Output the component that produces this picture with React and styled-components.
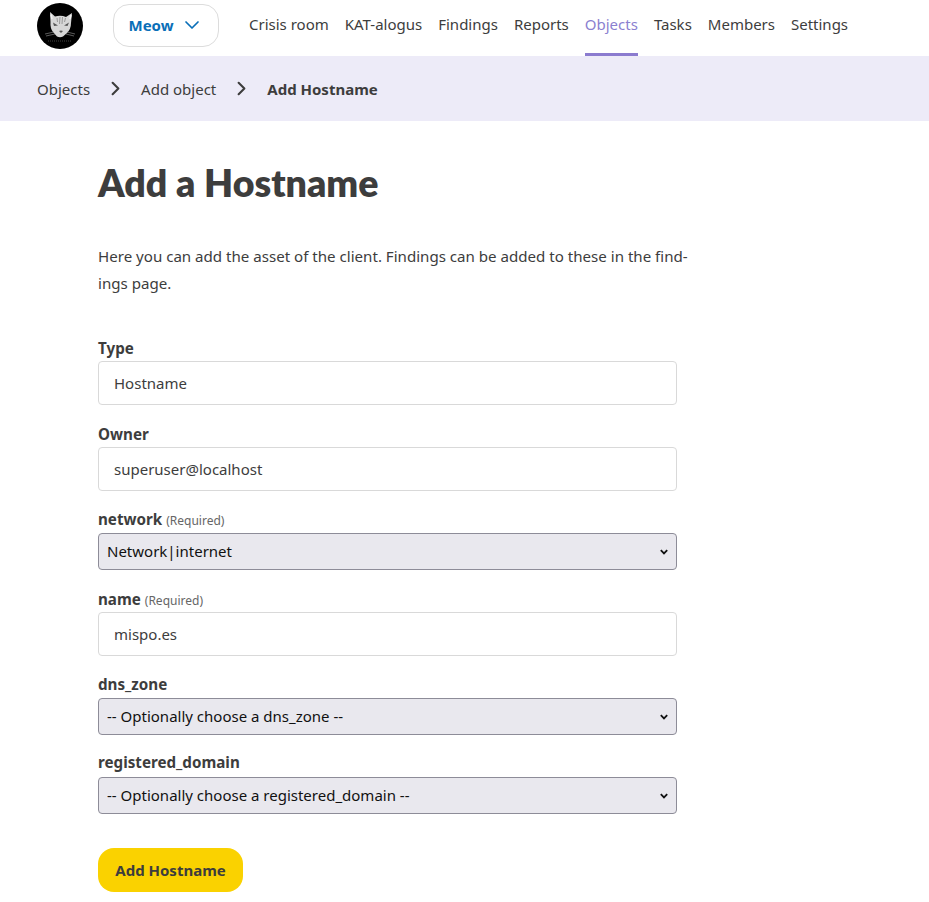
import React from 'react'
import styled, { createGlobalStyle } from 'styled-components'
import { ChevronDown, ChevronRight } from 'lucide-react'

const GlobalStyle = createGlobalStyle`
    html, body {
        margin: 0;
        background: #fff;
    }
    body {
        font-family: "Noto Sans", "Open Sans", sans-serif;
        font-size: 15px;
        color: #3d3d3d;
    }
`;

const selectArrow = `url("data:image/svg+xml,%3Csvg xmlns='http://www.w3.org/2000/svg' width='8' height='6' viewBox='0 0 8 6'%3E%3Cpath d='M.8 1.2 4 4.4 7.2 1.2' fill='none' stroke='%23111' stroke-width='1.8'/%3E%3C/svg%3E")`;

const Header = styled.header`
    display: flex;
    align-items: stretch;
    height: 56px;
    padding-left: 37px;
`;
const Logo = styled.svg`
    width: 46px;
    height: 46px;
    margin-top: 3px;
    flex: none;
`;
const OrgButton = styled.button`
    display: flex;
    align-items: center;
    justify-content: center;
    gap: 6px;
    box-sizing: border-box;
    width: 106px;
    height: 43px;
    margin: 4px 30px 0;
    padding: 0 0 2px;
    border: 1px solid #dcdcdc;
    border-radius: 16px;
    background: #fff;
    color: #0a6fb8;
    font: 700 15px "Noto Sans", sans-serif;
`;
const Nav = styled.nav`
    display: flex;
    gap: 16px;
`;
const NavLink = styled.a`
    display: flex;
    align-items: center;
    box-sizing: border-box;
    height: 56px;
    padding-bottom: 6px;
    color: ${p => (p.$active ? '#8b7fd0' : '#3d3d3d')};
    border-bottom: 3px solid ${p => (p.$active ? '#8b7bcf' : 'transparent')};
`;

const Breadcrumbs = styled.div`
    display: flex;
    align-items: center;
    gap: 14px;
    height: 65px;
    padding-left: 37px;
    background: #edebf8;
`;
const Crumb = styled.span`
    font-weight: ${p => (p.$current ? 700 : 400)};
`;

const Main = styled.main`
    padding: 33px 0 10px 98px;
`;
const Title = styled.h1`
    margin: 0;
    font: 800 37.5px/58px Lato, sans-serif;
    color: #3d3d3d;
`;
const Intro = styled.p`
    width: 600px;
    margin: 31px 0 0;
    font-size: 15.1px;
    line-height: 27px;
`;
const Form = styled.form`
    width: 579px;
    margin-top: 41px;
    display: flex;
    flex-direction: column;
`;
const Field = styled.div`
    display: flex;
    flex-direction: column;
    margin-bottom: ${p => p.$gap}px;
`;
const Label = styled.label`
    font-size: 15.2px;
    font-weight: 700;
    line-height: 20px;
    margin-bottom: ${p => p.$gap}px;
`;
const Hint = styled.span`
    font-size: 12px;
    font-weight: 400;
    color: #666;
`;
const Input = styled.input`
    box-sizing: border-box;
    height: 44px;
    width: 100%;
    padding: 0 15px;
    border: 1px solid #d9d9d9;
    border-radius: 4px;
    background: #fff;
    color: #3d3d3d;
    font: 400 15px "Noto Sans", sans-serif;
`;
const Select = styled.select`
    appearance: none;
    box-sizing: border-box;
    height: 37px;
    width: 100%;
    padding: 0 8px 2px;
    border: 1px solid #8d8c98;
    border-radius: 4px;
    background: #e9e8ee ${selectArrow} no-repeat right 8px center;
    color: #111;
    font: 400 15px "Noto Sans", sans-serif;
`;
const Submit = styled.button`
    width: 145px;
    height: 44px;
    margin-top: 4px;
    border: 0;
    border-radius: 16px;
    background: #fad200;
    color: #3d3d3d;
    font: 700 15px "Noto Sans", sans-serif;
`;

const CatLogo = () => (
    <Logo viewBox="0 0 46 46">
        <circle cx="23" cy="23" r="23" fill="#000" />
        <path
            d="M13 9 L18 13.5 Q24 12 29 14 L35 10 L34 20 Q34 26 30 30 L26 33.5 Q23 35 20 33.5 L16 29 Q13 25 13.5 19 Z"
            fill="#d6d6d6"
        />
        <path d="M16 19.5 L21 22.5 L17 23 Z M32 19.5 L27 22.5 L30.5 23 Z" fill="#555" />
        <path d="M23 14 L22.5 21 M25.5 14 L25 21 M20 15 L20.5 19 M28.5 15 L27.5 19" stroke="#999" strokeWidth="1" />
        <path d="M22 28 L24 30 L26 28 L24 27.5 Z" fill="#555" />
        <path d="M14 11.5 L15 16 M34 12 L33 16" stroke="#f2f2f2" strokeWidth="1.5" />
        <path
            d="M8 31 L17 29 M9 33 L18 31 M38 31 L30 29 M37 33 L29 31"
            stroke="#999"
            strokeWidth="0.6"
        />
        <path d="M11 38 H35" stroke="#444" strokeWidth="1" strokeDasharray="1 1" />
    </Logo>
)

const navItems = ['Crisis room', 'KAT-alogus', 'Findings', 'Reports', 'Objects', 'Tasks', 'Members', 'Settings']

const App = () => {
    return (
        <>
            <GlobalStyle />
            <Header>
                <CatLogo />
                <OrgButton>
                    Meow
                    <ChevronDown size={24} strokeWidth={1.7} />
                </OrgButton>
                <Nav>
                    {navItems.map(item => (
                        <NavLink key={item} $active={item === 'Objects'}>{item}</NavLink>
                    ))}
                </Nav>
            </Header>
            <Breadcrumbs>
                <Crumb>Objects</Crumb>
                <ChevronRight size={23} strokeWidth={2.2} />
                <Crumb>Add object</Crumb>
                <ChevronRight size={23} strokeWidth={2.2} />
                <Crumb $current>Add Hostname</Crumb>
            </Breadcrumbs>
            <Main>
                <Title>Add a Hostname</Title>
                <Intro>
                    Here you can add the asset of the client. Findings can be added to these in the find&shy;ings page.
                </Intro>
                <Form>
                    <Field $gap={19}>
                        <Label $gap={3}>Type</Label>
                        <Input readOnly value="Hostname" />
                    </Field>
                    <Field $gap={18}>
                        <Label $gap={3}>Owner</Label>
                        <Input readOnly value="superuser@localhost" />
                    </Field>
                    <Field $gap={19}>
                        <Label $gap={2}>network <Hint>(Required)</Hint></Label>
                        <Select defaultValue="internet">
                            <option value="internet">Network|internet</option>
                        </Select>
                    </Field>
                    <Field $gap={18}>
                        <Label $gap={1}>name <Hint>(Required)</Hint></Label>
                        <Input readOnly value="mispo.es" />
                    </Field>
                    <Field $gap={17}>
                        <Label $gap={4}>dns_zone</Label>
                        <Select>
                            <option>-- Optionally choose a dns_zone --</option>
                        </Select>
                    </Field>
                    <Field $gap={30}>
                        <Label $gap={5}>registered_domain</Label>
                        <Select>
                            <option>-- Optionally choose a registered_domain --</option>
                        </Select>
                    </Field>
                    <Submit type="button">Add Hostname</Submit>
                </Form>
            </Main>
        </>
    )
}

export default App
